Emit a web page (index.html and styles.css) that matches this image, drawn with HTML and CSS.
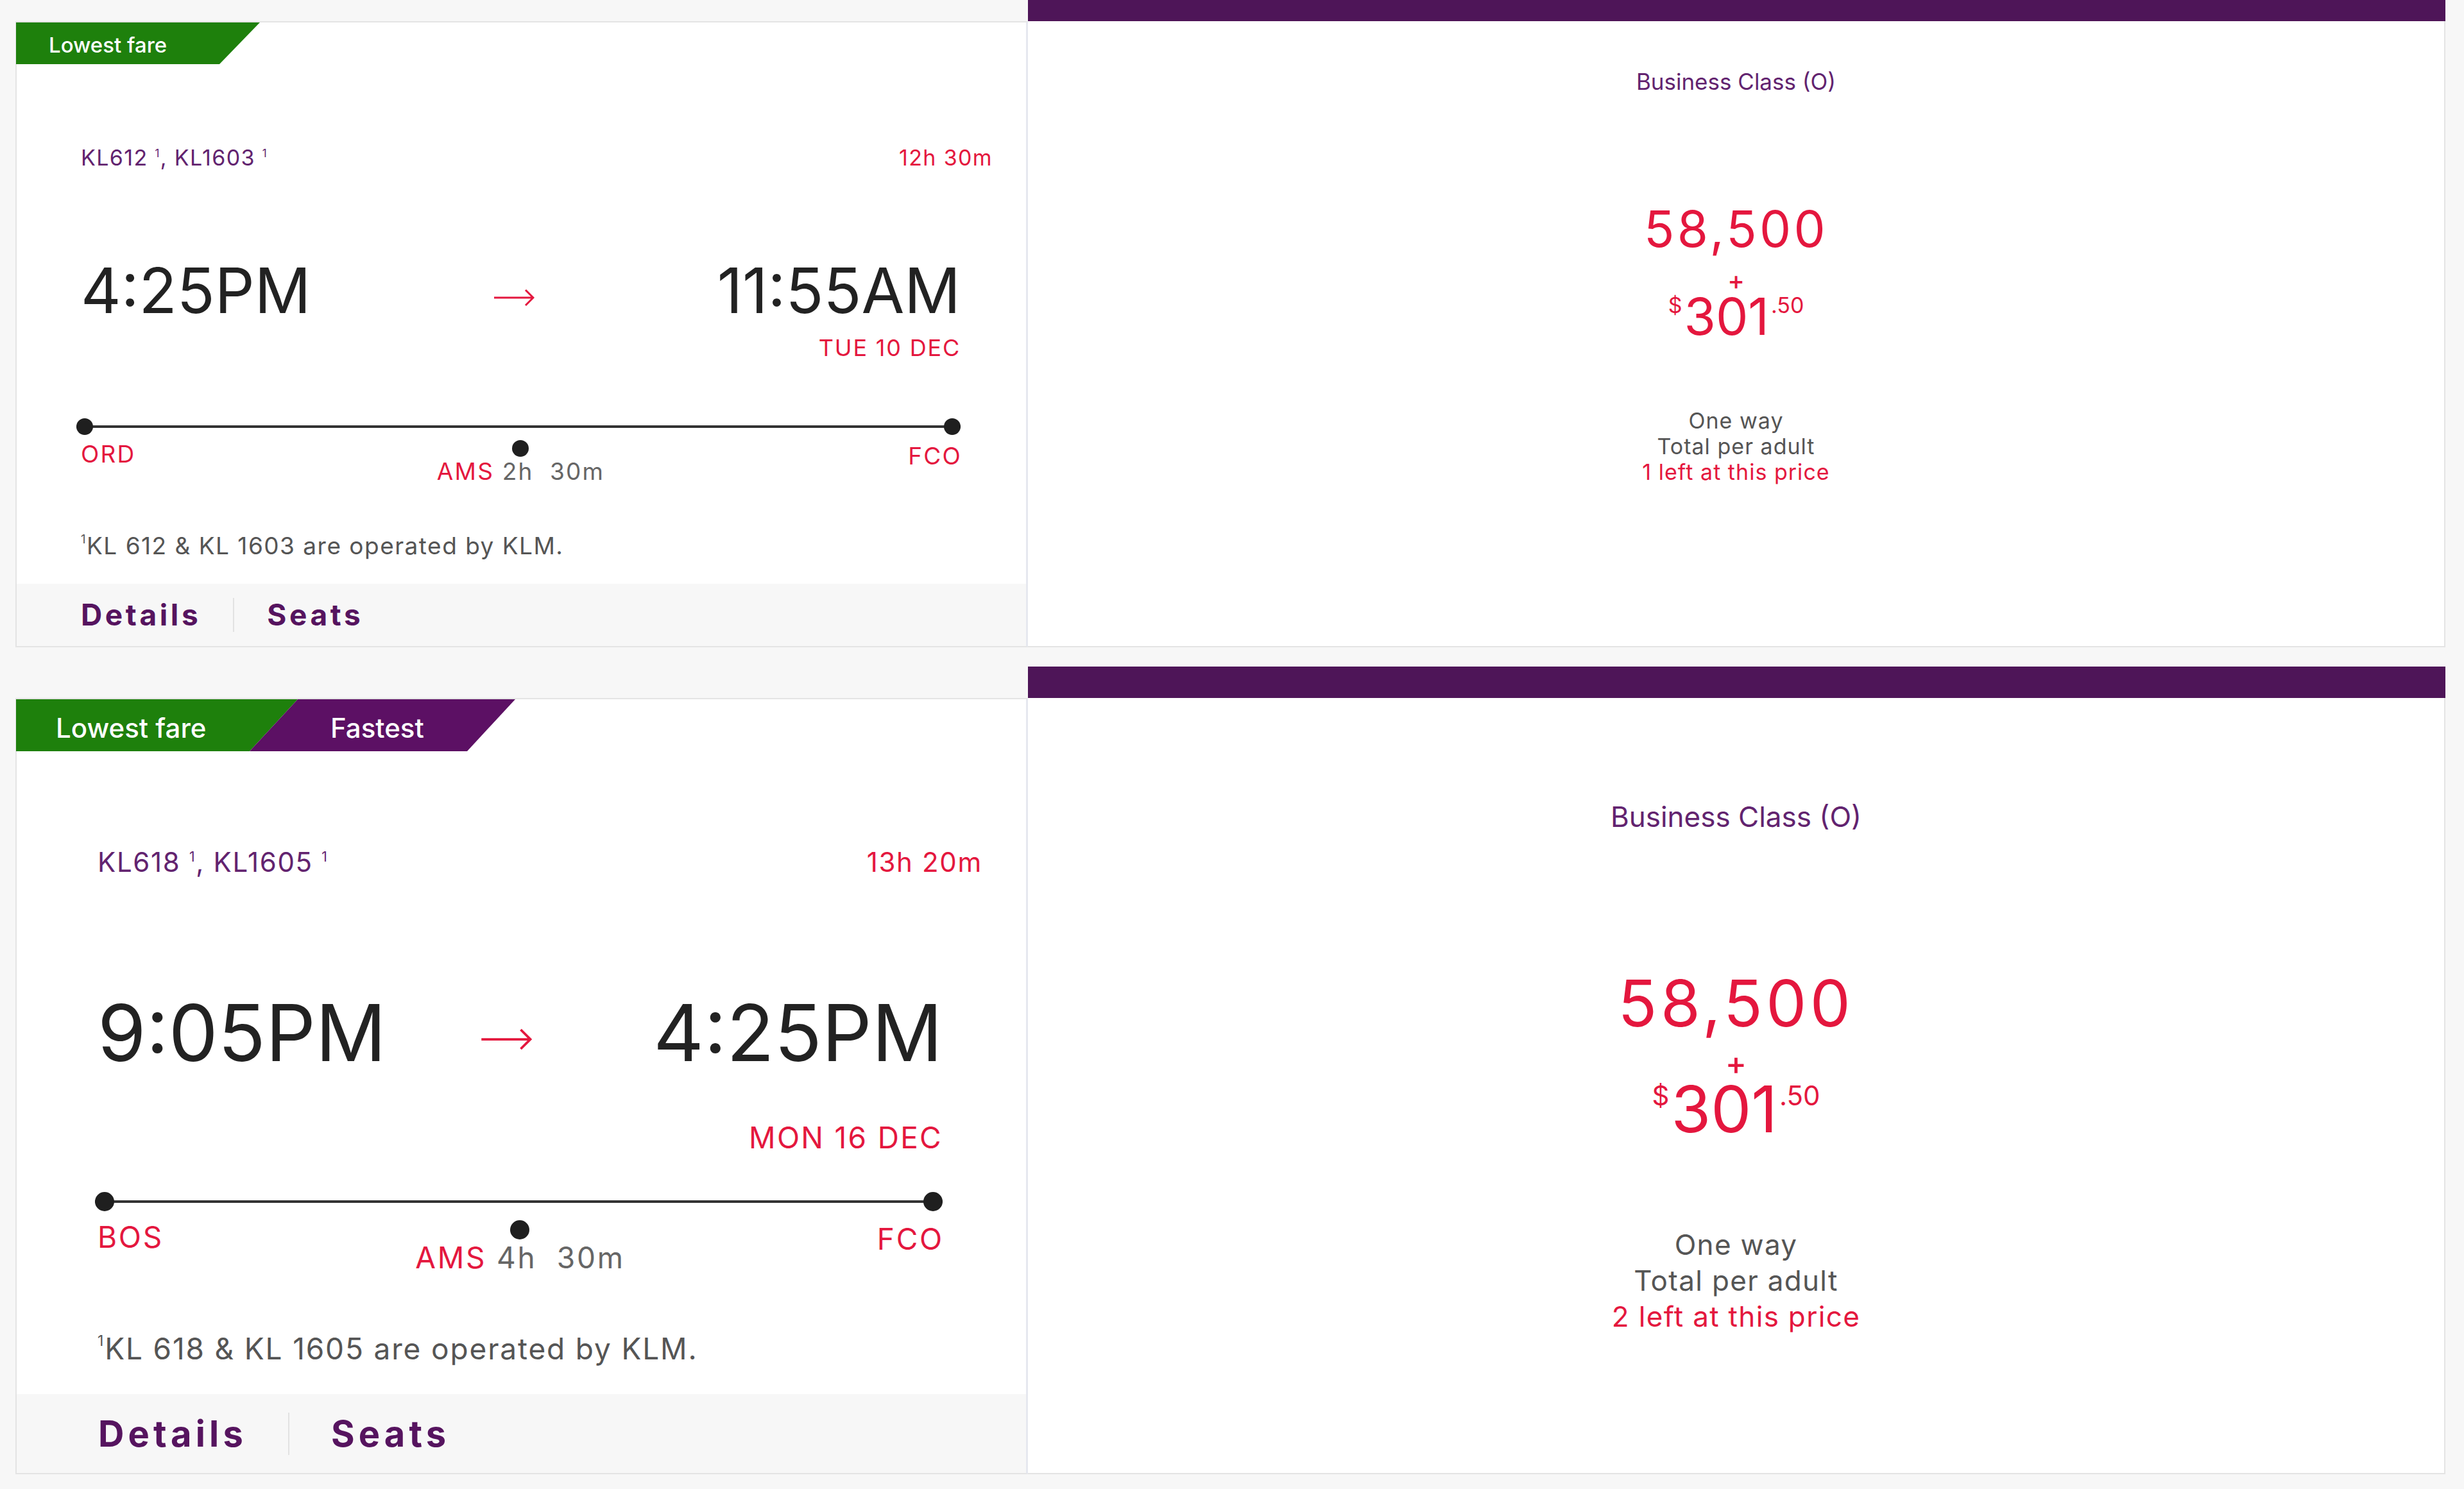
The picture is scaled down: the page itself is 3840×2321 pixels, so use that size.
FILE: index.html
```html
<!DOCTYPE html>
<html lang="en">
<head>
  <meta charset="UTF-8" />
  <meta name="viewport" content="width=device-width, initial-scale=1.0" />
  <title>Flight results</title>
  <link rel="stylesheet" href="styles.css">
</head>
<body>

  <div class="results">

    <div class="flight">
      <div class="fare-head"></div>

      <div class="flight-info">
        <div class="tags">
          <span class="tag tag-lowest">Lowest fare</span>
        </div>
        <div class="flight-body">
          <div class="legs">
            <span class="codes">KL612 <sup>1</sup>, KL1603 <sup>1</sup></span>
            <span class="duration">12h 30m</span>
          </div>
          <div class="times">
            <span class="time">4:25PM</span>
            <svg class="arrow" viewBox="0 0 64 32"><path d="M1 16H62M50 4L62 16L50 28" /></svg>
            <span class="time">11:55AM</span>
          </div>
          <div class="arr-date">TUE 10 DEC</div>
          <div class="route">
            <div class="route-line"><span class="dot"></span><span class="dot"></span></div>
            <div class="route-stops">
              <span class="code">ORD</span>
              <div class="stop">
                <span class="dot"></span>
                <span class="stop-time"><span class="code">AMS</span> 2h&nbsp; 30m</span>
              </div>
              <span class="code">FCO</span>
            </div>
          </div>
          <p class="note"><sup>1</sup>KL 612 &amp; KL 1603 are operated by KLM.</p>
        </div>
        <div class="flight-links">
          <a href="#">Details</a>
          <a href="#">Seats</a>
        </div>
      </div>

      <div class="fare">
        <div class="cabin">Business Class (O)</div>
        <div class="points">58,500</div>
        <div class="plus">+</div>
        <div class="cash"><small>$</small>301<small>.50</small></div>
        <div class="fare-notes">
          <div>One way</div>
          <div>Total per adult</div>
          <div class="seats-left">1 left at this price</div>
        </div>
      </div>
    </div>

    <div class="flight flight-lg">
      <div class="fare-head"></div>

      <div class="flight-info">
        <div class="tags">
          <span class="tag tag-lowest">Lowest fare</span>
          <span class="tag tag-fastest">Fastest</span>
        </div>
        <div class="flight-body">
          <div class="legs">
            <span class="codes">KL618 <sup>1</sup>, KL1605 <sup>1</sup></span>
            <span class="duration">13h 20m</span>
          </div>
          <div class="times">
            <span class="time">9:05PM</span>
            <svg class="arrow" viewBox="0 0 64 32"><path d="M1 16H62M50 4L62 16L50 28" /></svg>
            <span class="time">4:25PM</span>
          </div>
          <div class="arr-date">MON 16 DEC</div>
          <div class="route">
            <div class="route-line"><span class="dot"></span><span class="dot"></span></div>
            <div class="route-stops">
              <span class="code">BOS</span>
              <div class="stop">
                <span class="dot"></span>
                <span class="stop-time"><span class="code">AMS</span> 4h&nbsp; 30m</span>
              </div>
              <span class="code">FCO</span>
            </div>
          </div>
          <p class="note"><sup>1</sup>KL 618 &amp; KL 1605 are operated by KLM.</p>
        </div>
        <div class="flight-links">
          <a href="#">Details</a>
          <a href="#">Seats</a>
        </div>
      </div>

      <div class="fare">
        <div class="cabin">Business Class (O)</div>
        <div class="points">58,500</div>
        <div class="plus">+</div>
        <div class="cash"><small>$</small>301<small>.50</small></div>
        <div class="fare-notes">
          <div>One way</div>
          <div>Total per adult</div>
          <div class="seats-left">2 left at this price</div>
        </div>
      </div>
    </div>

  </div>

</body>
</html>
```

FILE: styles.css
```css
* { box-sizing: border-box; }
body { margin: 0; background: #f7f7f7; font-family: Inter, "Open Sans", Arial, sans-serif; color: #222; }

.results { padding: 0 29px 0 24px; }
.flight { display: grid; grid-template-columns: 1578px 1fr; }
.flight + .flight { margin-top: 30px; }

/* purple strip over the fare column */
.fare-head { grid-column: 2; grid-row: 1; height: 33px; background: #4e1558; }

.flight-info { grid-column: 1; grid-row: 2; background: #fff; border: 2px solid #e4e4e4; border-right: 3px solid #e6e8ef; }
.fare { grid-column: 2; grid-row: 2; background: #fff; border: 2px solid #e4e4e4; border-top: 0; border-left: 0; text-align: center; padding-top: 77px; }

/* badges */
.tags { display: flex; height: 65px; margin-left: -1px; }
.tag { display: flex; align-items: center; padding-top: 6px; color: #fff; font-size: 33px; font-weight: 500; line-height: 1; clip-path: polygon(0 0, 100% 0, calc(100% - 63px) 100%, 0 100%); }
.tag-lowest { width: 380px; padding-left: 51px; background: #1e800c; }
.tag-fastest { background: #5c1064; }

.flight-body { padding: 129px 102px 41px 100px; }

.legs { display: flex; justify-content: space-between; margin-right: -50px; font-size: 34px; line-height: 1; letter-spacing: .04em; }
.legs .codes { color: #62236f; }
.legs .duration { color: #e4173e; }
sup { font-size: .5em; line-height: 0; vertical-align: .75em; }

.times { display: flex; justify-content: space-between; margin-top: 141px; font-size: 97px; line-height: 1; }
.arrow { width: 64px; height: 32px; align-self: flex-end; margin-bottom: 21px; fill: none; stroke: #e4173e; stroke-width: 3; }
.arr-date { margin-top: 23px; text-align: right; font-size: 36px; line-height: 1; letter-spacing: .05em; color: #e4173e; }

/* route line with stopover */
.route { margin-top: 92px; }
.route-line { display: flex; justify-content: space-between; align-items: center; height: 26px; margin-left: -7px; background: linear-gradient(#333, #333) center / 100% 4px no-repeat; }
.dot { display: block; width: 26px; height: 26px; border-radius: 50%; background: #1f1f1f; }
.route-stops { display: grid; grid-template-columns: 1fr auto 1fr; margin-top: 8px; font-size: 37px; line-height: 1; letter-spacing: .06em; }
.route-stops > .code:first-child { margin-top: 3px; }
.route-stops > .code:last-child { justify-self: end; margin-top: 6px; margin-right: -2px; }
.code { color: #e4173e; }
.stop { display: flex; flex-direction: column; align-items: center; }
.stop-time { margin-top: 4px; color: #666; }

.note { margin: 79px 0 0; font-size: 37px; line-height: 1; letter-spacing: .04em; color: #555; }
.note sup { vertical-align: .9em; }

.flight-links { display: flex; align-items: center; height: 97px; padding-left: 100px; background: #f7f7f7; }
.flight-links a { font-size: 46px; font-weight: 700; line-height: 53px; letter-spacing: .1em; color: #56145f; text-decoration: none; }
.flight-links a + a { margin-left: 50px; padding-left: 51px; border-left: 2px solid #e2e2e2; }

/* fare column */
.cabin { font-size: 35px; line-height: 1; color: #62236f; }
.points { margin-top: 173px; font-size: 78px; line-height: 1; letter-spacing: .055em; color: #e4173e; }
.plus { margin-top: 25px; font-size: 40px; font-weight: 500; line-height: 32px; color: #e4173e; }
.cash { display: flex; justify-content: center; font-size: 80px; line-height: 1; color: #e4173e; }
.cash small { margin: 6px 3px 0; font-size: 34px; }
.fare-notes { margin-top: 103px; font-size: 34px; line-height: 40px; letter-spacing: .03em; color: #555; }
.seats-left { color: #e4173e; }

/* second result is shown larger */
.flight-lg .fare-head { height: 49px; }
.flight-lg .tags { height: 81px; }
.flight-lg .tag { padding-top: 8px; font-size: 42px; clip-path: polygon(0 0, 100% 0, calc(100% - 75px) 100%, 0 100%); }
.flight-lg .tag-lowest { width: 439px; padding-left: 62px; }
.flight-lg .tag-fastest { width: 414px; margin-left: -75px; padding-left: 126px; clip-path: polygon(75px 0, 100% 0, calc(100% - 75px) 100%, 0 100%); }
.flight-lg .flight-body { padding: 152px 130px 48px 126px; }
.flight-lg .legs { margin-right: -62px; font-size: 42px; }
.flight-lg .times { margin-top: 184px; font-size: 122px; }
.flight-lg .arrow { width: 80px; height: 40px; margin-bottom: 31px; margin-right: 42px; }
.flight-lg .arr-date { margin-top: 79px; font-size: 46px; }
.flight-lg .route { margin-top: 62px; }
.flight-lg .route-line { height: 30px; margin-left: -4px; }
.flight-lg .dot { width: 30px; height: 30px; }
.flight-lg .route-stops { margin-top: 14px; font-size: 46px; }
.flight-lg .stop-time { margin-top: 5px; }
.flight-lg .note { margin-top: 96px; font-size: 46px; }
.flight-lg .flight-links { height: 123px; padding-left: 127px; }
.flight-lg .flight-links a { font-size: 56px; line-height: 66px; letter-spacing: .11em; }
.flight-lg .flight-links a + a { margin-left: 64px; padding-left: 65px; }
.flight-lg .fare { padding-top: 163px; }
.flight-lg .cabin { font-size: 44px; }
.flight-lg .points { margin-top: 219px; font-size: 100px; }
.flight-lg .plus { margin-top: 23px; font-size: 50px; line-height: 40px; }
.flight-lg .cash { margin-top: 2px; font-size: 100px; }
.flight-lg .cash small { margin-top: 8px; font-size: 42px; }
.flight-lg .fare-notes { margin-top: 133px; font-size: 44px; line-height: 56px; }
```
